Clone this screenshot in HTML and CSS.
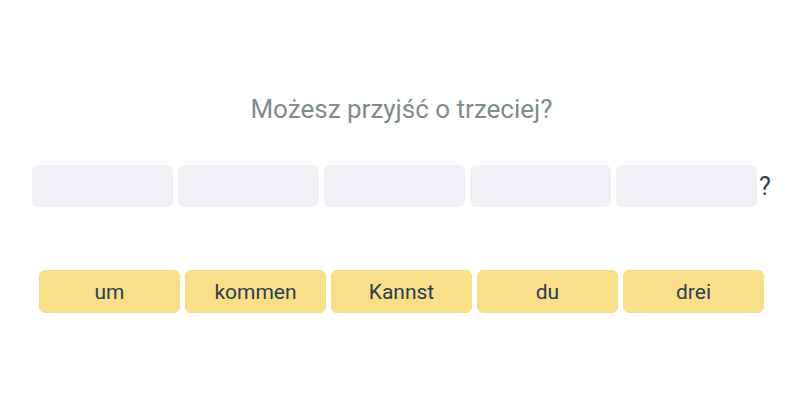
FILE: index.html
```html
<!DOCTYPE html>
<html lang="pl">
<head>
	<meta charset="UTF-8">
	<title>Ułóż zdanie</title>
	<link rel="stylesheet" href="styles.css">
</head>
<body>
	<div class="exercise">
		<h1 class="prompt">Możesz przyjść o trzeciej?</h1>

		<!-- miejsca na odpowiedź -->
		<div class="answer">
			<span class="slot"></span>
			<span class="slot"></span>
			<span class="slot"></span>
			<span class="slot"></span>
			<span class="slot"></span>
			<span class="mark">?</span>
		</div>

		<!-- słowa do wyboru -->
		<div class="words">
			<button class="word">um</button>
			<button class="word">kommen</button>
			<button class="word">Kannst</button>
			<button class="word">du</button>
			<button class="word">drei</button>
		</div>
	</div>
</body>
</html>
```

FILE: styles.css
```css
*{padding: 0; margin: 0; box-sizing: border-box;}
body{
	background: #fff;
	font-family: Roboto, "Noto Sans", sans-serif;
	color: #2c3e50;
}
.exercise{
	display: flex;
	flex-direction: column;
	align-items: center;
	padding: 94px 0 0 3px;
}
.prompt{
	font-size: 26px;
	line-height: 30px;
	font-weight: 400;
	color: #7f8c8d;
}
.answer{
	display: flex;
	align-items: center;
	gap: 5px;
	margin-top: 41px;
}
.slot{
	width: 141px;
	height: 42px;
	background: #eff1f5;
	border-radius: 6px;
}
.mark{
	font-size: 25px;
	margin-left: -3px;
}
.words{
	display: flex;
	gap: 5px;
	margin-top: 63px;
}
.word{
	width: 141px;
	height: 43px;
	font-family: inherit;
	font-size: 21px;
	color: #2c3e50;
	background: #f8df88;
	border: 1px solid #f3dc90;
	border-radius: 6px;
}
```
